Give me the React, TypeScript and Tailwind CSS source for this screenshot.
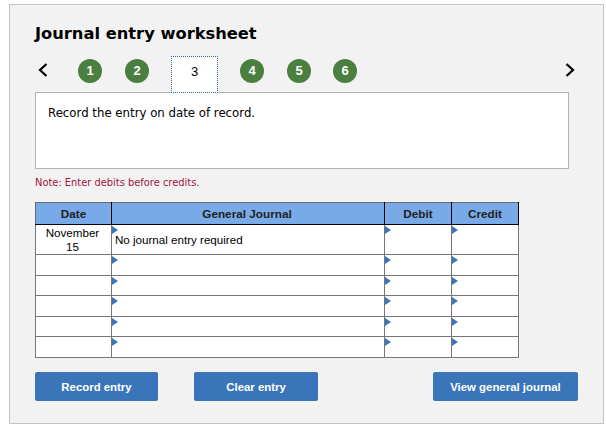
function Tri() {
  return (
    <svg className="absolute left-0 top-[1px]" width="6" height="8" viewBox="0 0 6 8">
      <path d="M0 0 L6 4 L0 8 Z" fill="#3a75ba" />
    </svg>
  );
}

function Step({ n, className }: { n: number; className: string }) {
  return (
    <div className={`flex h-6 w-6 items-center justify-center rounded-full bg-[#4a7f3f] text-[13px] font-bold text-white ${className}`}>
      {n}
    </div>
  );
}

const rowHeights = ["h-[30px]", "h-[21px]", "h-[20px]", "h-[21px]", "h-[20px]", "h-[21px]"];

export default function App() {
  return (
    <div className="h-[428px] w-[606px] overflow-hidden bg-white pl-[9px] pt-[4px]" style={{ fontFamily: '"Liberation Sans", Arial, sans-serif' }}>
      <div className="h-[420px] w-[595px] border border-[#c4c4c4] bg-[#f2f2f2] pl-[25px]">
        <h1 className="mt-[18px] h-[22px] text-[16.3px] font-bold leading-[22px] text-black" style={{ fontFamily: '"DejaVu Sans", Verdana, sans-serif' }}>
          Journal entry worksheet
        </h1>
        <div className="mt-[11px] flex h-[38px] w-[540px] items-start">
          <svg className="ml-[3px] mt-[7px]" width="10" height="14" viewBox="0 0 10 14" fill="none" stroke="#000" strokeWidth="2.2">
            <path d="M8.5 1 L2 7 L8.5 13" />
          </svg>
          <Step n={1} className="ml-[30px] mt-[3px]" />
          <Step n={2} className="ml-[23px] mt-[3px]" />
          <div className="relative z-10 ml-[22px] flex h-[37px] w-[47px] items-center justify-center border border-dotted border-[#2f5f9e] bg-white pb-[5px] text-[13px] text-black">
            3
          </div>
          <Step n={4} className="ml-[22px] mt-[3px]" />
          <Step n={5} className="ml-[23px] mt-[3px]" />
          <Step n={6} className="ml-[22px] mt-[3px]" />
          <svg className="ml-auto mt-[7px]" width="10" height="14" viewBox="0 0 10 14" fill="none" stroke="#000" strokeWidth="2.2">
            <path d="M1.5 1 L8 7 L1.5 13" />
          </svg>
        </div>
        <div className="-mt-[2px] h-[77px] w-[534px] border border-[#b4b4b4] bg-white pl-[12px] pt-[11px] text-[11.75px] leading-[18px] text-black" style={{ fontFamily: '"DejaVu Sans", Verdana, sans-serif' }}>
          Record the entry on date of record.
        </div>
        <p className="mt-[7px] h-[14px] text-[9.9px] leading-[14px] text-[#a0153e]" style={{ fontFamily: '"DejaVu Sans", Verdana, sans-serif' }}>
          Note: Enter debits before credits.
        </p>
        <table className="mt-[12px] w-[483px] table-fixed border-collapse text-[11.6px] text-black">
          <colgroup>
            <col className="w-[76px]" />
            <col className="w-[273px]" />
            <col className="w-[67px]" />
            <col className="w-[67px]" />
          </colgroup>
          <thead>
            <tr className="h-[22px] bg-[#77aae6] text-[11.75px] font-bold text-[#222]">
              <th className="border border-[#6b6b6b] border-b-black border-r-black p-0 font-bold">Date</th>
              <th className="border border-[#6b6b6b] border-b-black border-r-black p-0 pr-[2px] font-bold">General Journal</th>
              <th className="border border-[#6b6b6b] border-b-black border-r-black p-0 font-bold">Debit</th>
              <th className="border border-[#6b6b6b] border-b-black border-r-black p-0 font-bold">Credit</th>
            </tr>
          </thead>
          <tbody>
            {rowHeights.map((h, i) => (
              <tr key={i} className={`${h} bg-white`}>
                <td className="border border-[#777] p-0 pr-[2px] text-center leading-[14px]">
                  {i === 0 ? (
                    <>
                      November
                      <br />
                      15
                    </>
                  ) : null}
                </td>
                <td className="relative border border-[#777] p-0 pl-[3px] pt-[1px] align-middle">
                  <Tri />
                  {i === 0 ? "No journal entry required" : null}
                </td>
                <td className="relative border border-[#777] p-0">
                  <Tri />
                </td>
                <td className="relative border border-[#777] p-0">
                  <Tri />
                </td>
              </tr>
            ))}
          </tbody>
        </table>
        <div className="mt-[14px] flex text-[11.4px] font-bold text-white">
          <button className="h-[29px] w-[123px] rounded-[2px] bg-[#3a75ba] pt-[2px]">Record entry</button>
          <button className="ml-[36px] h-[29px] w-[124px] rounded-[2px] bg-[#3a75ba] pt-[2px]">Clear entry</button>
          <button className="ml-[115px] h-[29px] w-[145px] rounded-[2px] bg-[#3a75ba] pt-[2px]">View general journal</button>
        </div>
      </div>
    </div>
  );
}
